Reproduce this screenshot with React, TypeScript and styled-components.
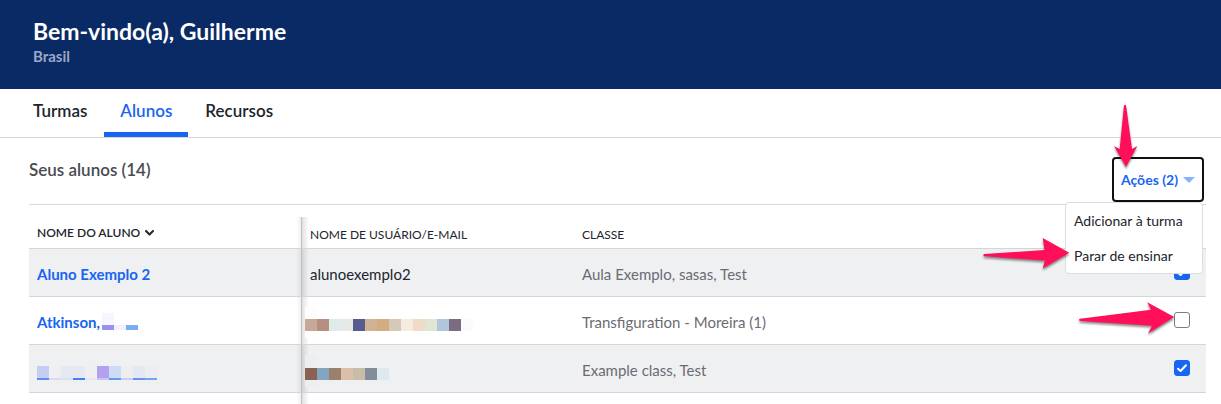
import React from "react";
import styled, { createGlobalStyle } from "styled-components";

const GlobalStyle = createGlobalStyle`
  *, *::before, *::after { box-sizing: border-box; }
  body {
    margin: 0;
    background: #ffffff;
    color: #21242c;
    font-family: Lato, "Liberation Sans", sans-serif;
  }
`;

const Page = styled.div`
  position: relative;
  overflow: hidden;
`;

const Header = styled.header`
  padding: 17px 33px 23px;
  background: #0a2a66;
  color: #ffffff;
`;

const Title = styled.h1`
  margin: 0;
  font-size: 23px;
  line-height: 29px;
  font-weight: 700;
`;

const Country = styled.div`
  font-size: 15px;
  line-height: 20px;
  font-weight: 700;
  color: #9ba9c5;
`;

const Tabs = styled.nav`
  display: flex;
  gap: 1px;
  height: 49px;
  padding-left: 17px;
  border-bottom: 1px solid #d6d8da;
`;

const Tab = styled.a<{ $active?: boolean }>`
  padding: 10px 16px 0;
  border-bottom: 5px solid ${(p) => (p.$active ? "#1865f2" : "transparent")};
  color: ${(p) => (p.$active ? "#1865f2" : "#21242c")};
  font-size: 17px;
  line-height: 24px;
  font-weight: 600;
  text-decoration: none;
`;

const Content = styled.main`
  padding: 19px 15px 0 29px;
`;

const Toolbar = styled.div`
  display: flex;
  justify-content: space-between;
  align-items: flex-start;
  height: 48px;
  padding-right: 2px;
  border-bottom: 1px solid #d6d8da;
`;

const SectionTitle = styled.h2`
  margin: 0;
  font-size: 17px;
  line-height: 26px;
  font-weight: 600;
  color: #4a4b50;
`;

const ActionsArea = styled.div`
  position: relative;
`;

const ActionsButton = styled.button`
  display: flex;
  align-items: center;
  gap: 5px;
  height: 45px;
  padding: 0 7px;
  border: 2px solid #101010;
  border-radius: 4px;
  background: #ffffff;
  color: #1865f2;
  font-family: inherit;
  font-size: 14px;
  line-height: 20px;
  font-weight: 700;
`;

const Menu = styled.div`
  position: absolute;
  z-index: 2;
  top: 100%;
  right: 1px;
  width: 138px;
  border: 1px solid #dcdddf;
  border-radius: 4px;
  background: #ffffff;
`;

const MenuItem = styled.button`
  display: block;
  width: 100%;
  height: 35px;
  padding: 0 8px;
  border: 0;
  background: transparent;
  color: #21242c;
  font-family: inherit;
  font-size: 14px;
  line-height: 20px;
  text-align: left;
  white-space: nowrap;
`;

const Table = styled.table`
  width: 100%;
  margin-top: 12px;
  border-collapse: separate;
  border-spacing: 0;
  table-layout: fixed;
`;

const NameCol = styled.col`
  width: 273px;
`;

const UserCol = styled.col`
  width: 272px;
`;

const CheckCol = styled.col`
  width: 64px;
`;

const HeadCell = styled.th<{ $divider?: "left" | "right" }>`
  height: 32px;
  padding: ${(p) => (p.$divider === "left" ? "0 8px" : "4px 8px 0")};
  border-bottom: 1px solid #d3d5d8;
  ${(p) => dividerEdge(p.$divider)}
  font-size: 12px;
  line-height: 20px;
  font-weight: ${(p) => (p.$divider === "left" ? 600 : 400)};
  text-align: left;
`;

const Row = styled.tr`
  &:nth-child(odd) { background: #eff0f2; }
`;

const Cell = styled.td<{ $divider?: "left" | "right"; $muted?: boolean }>`
  height: 48px;
  padding: 2px 8px 0;
  border-bottom: 1px solid #d3d5d8;
  ${(p) => dividerEdge(p.$divider)}
  color: ${(p) => (p.$muted ? "#6b6c72" : "#21242c")};
  font-size: 15px;
  line-height: 20px;
`;

const FillerCell = styled.td<{ $divider?: "left" | "right" }>`
  height: 24px;
  ${(p) => dividerEdge(p.$divider)}
`;

/* The frozen name column ends in a line with a soft shadow on both sides. */
function dividerEdge(side?: "left" | "right") {
  if (side === "left")
    return `
      border-right: 1px solid #bfc0c2;
      background-image: linear-gradient(to left, rgba(0,0,0,0.06), rgba(0,0,0,0));
      background-size: 5px 100%;
      background-position: right top;
      background-repeat: no-repeat;
      background-origin: padding-box;
      background-clip: padding-box;
    `;
  if (side === "right")
    return `
      background-image: linear-gradient(to right, rgba(0,0,0,0.12), rgba(0,0,0,0.07) 40%, rgba(0,0,0,0));
      background-size: 7px 100%;
      background-repeat: no-repeat;
    `;
  return "";
}

const SortLabel = styled.span`
  display: flex;
  align-items: center;
  gap: 5px;
`;

const StudentLink = styled.a`
  display: flex;
  align-items: flex-end;
  gap: 2px;
  min-height: 20px;
  color: #1865f2;
  font-weight: 700;
  text-decoration: none;
`;

const Mosaic = styled.svg<{ $bleed?: boolean }>`
  display: block;
  margin: ${(p) => (p.$bleed ? "2px 0 0 -5px" : "0")};
`;

const CheckLabel = styled.label`
  display: grid;
  justify-content: end;
  padding-right: 8px;
  margin-top: -4px;
  > * { grid-area: 1 / 1; }
  svg { pointer-events: none; }
`;

const Checkbox = styled.input`
  appearance: none;
  width: 16px;
  height: 16px;
  margin: 0;
  border: 1px solid #7d7e83;
  border-radius: 3px;
  background: #ffffff;
  &:checked { border-color: #1865f2; background: #1865f2; }
  &:not(:checked) + svg { visibility: hidden; }
`;

const Arrows = styled.svg`
  position: absolute;
  z-index: 3;
  top: 0;
  right: 0;
  pointer-events: none;
  filter: drop-shadow(0 2px 1px rgba(0, 0, 0, 0.45));
`;

type Tile = [x: number, y: number, height: number, color: string];

function Tiles({ height, width, tiles, bleed }: { height: number; width: number; tiles: Tile[]; bleed?: boolean }) {
  return (
    <Mosaic width={width} height={height} shapeRendering="crispEdges" $bleed={bleed} aria-hidden="true">
      {tiles.map(([x, y, h, color]) => (
        <rect key={`${x}-${y}`} x={x} y={y} width={12} height={h} fill={color} />
      ))}
    </Mosaic>
  );
}

const strip = (colors: string[], y: number, h: number): Tile[] => colors.map((c, i) => [i * 12, y, h, c]);

const surname = [...strip(["#f7f5fe"], 0, 12), ...strip(["#9a90f0", "#f3f0fb", "#76aef5"], 12, 5)];
const fullName = [
  ...strip(["#c5cdf2", "#efeff1", "#e7e9f2", "#e7e9f2", "#eeeff1", "#b3a0f1", "#cbddf2", "#eeeef1", "#e3e8f2", "#ebedf2"], 0, 12),
  ...strip(["#5c8ef0", "#dbd8f1", "#d7e4f1", "#4580f2", "#e8e4f0", "#cbc3f0", "#6698f0", "#d1caf0", "#6d90f1", "#72a5f1"], 12, 2),
];
const userB = [
  ...strip(["#fdfdfd"], 0, 31),
  ...strip(["#c7a797", "#b68f82", "#deebea", "#e6e9e4", "#575b8f", "#cfb393", "#d4ac82", "#d6c9b9", "#f4ecdf", "#f0dbc8", "#e1e5d6", "#afc6dc", "#7c6c82", "#fafcfc"], 12, 12),
];
const userC = [
  ...strip(["#edeef0"], 1, 32),
  ...strip(["#8b6153", "#84a5c2", "#9b806d", "#dac0aa", "#c7bda9", "#828d99", "#dfe7ef"], 14, 12),
];

const students = [
  { label: "Aluno Exemplo 2", name: <>Aluno Exemplo 2</>, user: <>alunoexemplo2</>, classes: "Aula Exemplo, sasas, Test", checked: true },
  {
    label: "Atkinson",
    name: <>Atkinson,<Tiles width={36} height={19} tiles={surname} /></>,
    user: <Tiles width={168} height={31} tiles={userB} bleed />,
    classes: "Transfiguration - Moreira (1)",
    checked: false,
  },
  {
    label: "Example class",
    name: <Tiles width={120} height={14} tiles={fullName} />,
    user: <Tiles width={84} height={33} tiles={userC} bleed />,
    classes: "Example class, Test",
    checked: true,
  },
];

export default function App() {
  return (
    <Page>
      <GlobalStyle />
      <Header>
        <Title>Bem-vindo(a), Guilherme</Title>
        <Country>Brasil</Country>
      </Header>
      <Tabs>
        <Tab href="#turmas">Turmas</Tab>
        <Tab href="#alunos" $active aria-current="page">Alunos</Tab>
        <Tab href="#recursos">Recursos</Tab>
      </Tabs>
      <Content>
        <Toolbar>
          <SectionTitle>Seus alunos (14)</SectionTitle>
          <ActionsArea>
            <ActionsButton aria-haspopup="menu" aria-expanded="true">
              Ações (2)
              <svg width="12" height="6" aria-hidden="true"><path d="M0 0H12L6 6Z" fill="#8bb2f9" /></svg>
            </ActionsButton>
            <Menu role="menu">
              <MenuItem role="menuitem">Adicionar à turma</MenuItem>
              <MenuItem role="menuitem">Parar de ensinar</MenuItem>
            </Menu>
          </ActionsArea>
        </Toolbar>
        <Table>
          <colgroup>
            <NameCol />
            <UserCol />
            <col />
            <CheckCol />
          </colgroup>
          <thead>
            <tr>
              <HeadCell $divider="left">
                <SortLabel>
                  NOME DO ALUNO
                  <svg width="9" height="6" fill="none" stroke="#21242c" strokeWidth="2" strokeLinecap="round" strokeLinejoin="round" aria-hidden="true">
                    <path d="M1 1L4.5 4.5L8 1" />
                  </svg>
                </SortLabel>
              </HeadCell>
              <HeadCell $divider="right">NOME DE USUÁRIO/E-MAIL</HeadCell>
              <HeadCell>CLASSE</HeadCell>
              <HeadCell />
            </tr>
          </thead>
          <tbody>
            {students.map((s) => (
              <Row key={s.label}>
                <Cell $divider="left"><StudentLink href="#aluno">{s.name}</StudentLink></Cell>
                <Cell $divider="right">{s.user}</Cell>
                <Cell $muted>{s.classes}</Cell>
                <Cell>
                  <CheckLabel>
                    <Checkbox type="checkbox" defaultChecked={s.checked} aria-label={s.label} />
                    <svg width="16" height="16" fill="none" stroke="#ffffff" strokeWidth="2" strokeLinecap="round" strokeLinejoin="round" aria-hidden="true">
                      <path d="M4 8.7L6.6 11L12 5.2" />
                    </svg>
                  </CheckLabel>
                </Cell>
              </Row>
            ))}
            <tr>
              <FillerCell $divider="left" />
              <FillerCell $divider="right" />
              <FillerCell colSpan={2} />
            </tr>
          </tbody>
        </Table>
      </Content>
      <Arrows width="241" height="340" viewBox="980 0 241 340" fill="#ff0f59" aria-hidden="true">
        <path d="M1124 105.500Q1125 104 1126 105.500L1132 149L1137.300 146L1126 167L1114 146L1119.700 149Z" />
        <path d="M984 254L1044.500 250L1042.700 238L1069.300 252.700L1042.700 268.500L1045 260.500L984 256.300Q982.500 255 984 254Z" />
        <path d="M1080 318.800L1151 309.800L1147.200 302.200L1174.300 317L1148 333.500L1152 325.800L1080 321Q1078 320 1080 318.800Z" />
      </Arrows>
    </Page>
  );
}
